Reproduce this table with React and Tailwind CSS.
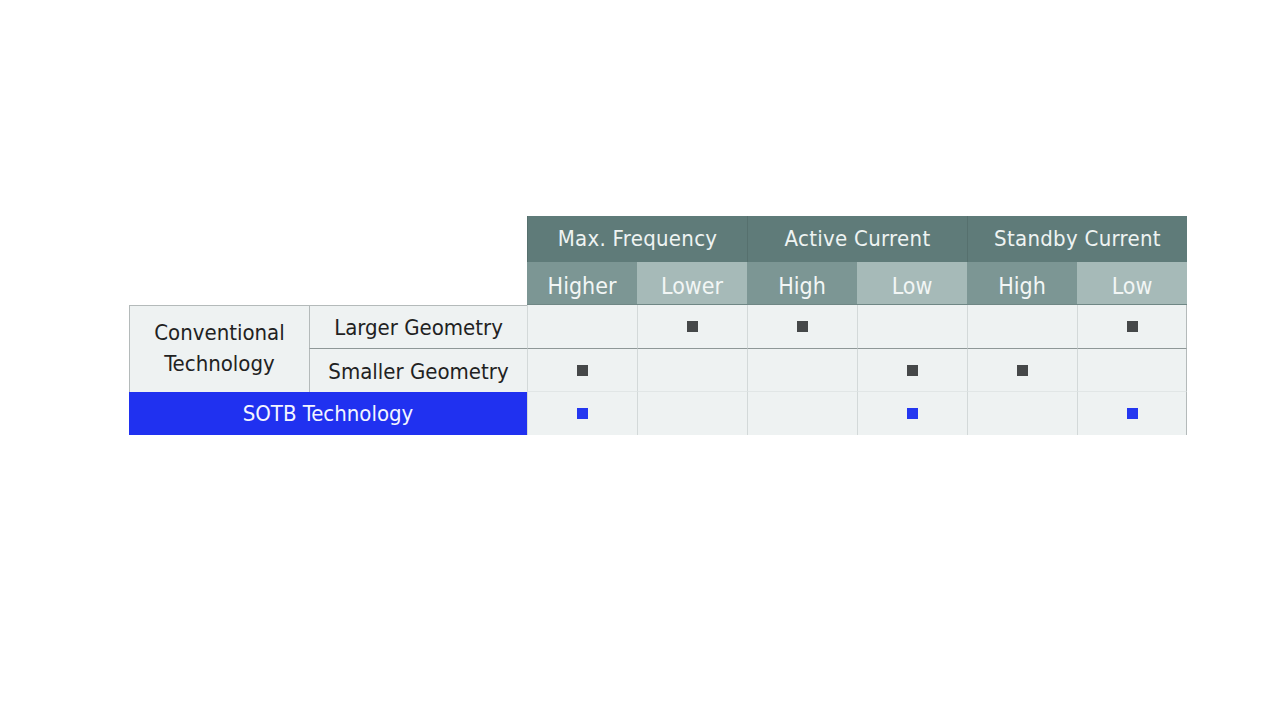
const font = { fontFamily: "'Liberation Sans Narrow', 'DejaVu Sans Condensed', 'Liberation Sans', sans-serif" };

const groups = ["Max. Frequency", "Active Current", "Standby Current"];
const subs = ["Higher", "Lower", "High", "Low", "High", "Low"];

// 0 = empty, 1 = dark marker, 2 = blue marker
const rows = [
  [0, 1, 1, 0, 0, 1],
  [1, 0, 0, 1, 1, 0],
  [2, 0, 0, 2, 0, 2],
];

function Marker({ kind }) {
  if (!kind) return null;
  return (
    <span
      className={
        kind === 1
          ? "block w-[11px] h-[11px] bg-[#454849]"
          : "block w-[11px] h-[11px] bg-[#2437f0]"
      }
    />
  );
}

function DataCells({ values, rowIdx }) {
  return values.map((v, i) => (
    <div
      key={i}
      className={
        "flex items-center justify-center bg-[#eef2f2] border-l border-[#d3d9d9] " +
        (i === 5 ? "border-r border-r-[#b4baba] " : "") +
        (rowIdx === 0 ? "border-b border-b-[#8e9797] " : "") +
        (rowIdx === 1 ? "border-b border-b-[#e1e6e6] " : "")
      }
    >
      <Marker kind={v} />
    </div>
  ));
}

export default function App() {
  return (
    <div className="w-[1280px] h-[721px] bg-white pt-[216px] pl-[129px]" style={font}>
      <div className="grid grid-cols-[180px_218px_repeat(6,110px)] grid-rows-[46px_43px_44px_43px_43px]">
        {/* empty top-left */}
        <div className="col-span-2 row-span-2" />

        {groups.map((g) => (
          <div
            key={g}
            className="col-span-2 flex items-center justify-center bg-[#5f7b79] border-l border-[#56706e] text-[22px] text-[#eef3f2] tracking-[0.3px] pb-[1px]"
          >
            {g}
          </div>
        ))}

        {subs.map((s, i) => (
          <div
            key={i}
            className={
              "flex items-center justify-center text-[23px] text-[#f2f6f5] border-b border-[#6f8785] pt-[6px] " +
              (i % 2 === 0 ? "bg-[#7c9694]" : "bg-[#a6bab8]")
            }
          >
            {s}
          </div>
        ))}

        {/* Conventional technology block */}
        <div className="row-span-2 flex items-center justify-center text-center bg-[#eef2f2] border-l border-t border-[#b4baba] text-[22px] leading-[31px] text-[#1f2222] pb-[2px]">
          Conventional
          <br />
          Technology
        </div>
        <div className="flex items-center justify-center bg-[#eef2f2] border-l border-t border-b border-[#b4baba] border-b-[#8e9797] text-[22px] text-[#1f2222] pt-[1px]">
          Larger Geometry
        </div>
        <DataCells values={rows[0]} rowIdx={0} />

        <div className="flex items-center justify-center bg-[#eef2f2] border-l border-[#b4baba] text-[22px] text-[#1f2222] pt-[2px]">
          Smaller Geometry
        </div>
        <DataCells values={rows[1]} rowIdx={1} />

        <div className="col-span-2 flex items-center justify-center bg-[#2031f0] text-[22px] text-[#f3f5ff]">
          SOTB Technology
        </div>
        <DataCells values={rows[2]} rowIdx={2} />
      </div>
    </div>
  );
}
